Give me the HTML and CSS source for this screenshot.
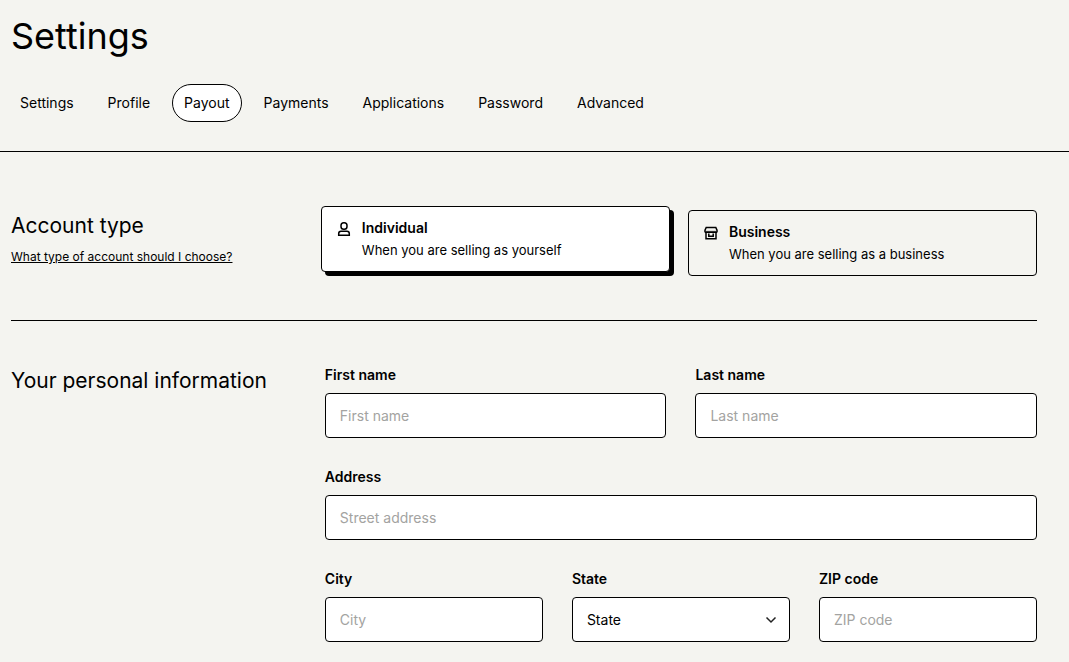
FILE: index.html
```html
<!DOCTYPE html>
<html lang="en">
<head>
  <meta charset="UTF-8">
  <meta name="viewport" content="width=device-width, initial-scale=1.0">
  <title>Settings</title>
  <link rel="stylesheet" href="styles.css">
</head>
<body>
  <header class="page-header">
    <h1>Settings</h1>
    <nav class="tabs">
      <a href="#settings">Settings</a>
      <a href="#profile">Profile</a>
      <a href="#payout" class="active" aria-current="page">Payout</a>
      <a href="#payments">Payments</a>
      <a href="#applications">Applications</a>
      <a href="#password">Password</a>
      <a href="#advanced">Advanced</a>
    </nav>
  </header>

  <main>
    <section class="section">
      <div class="section-intro">
        <h2>Account type</h2>
        <a href="#account-type" class="help-link">What type of account should I choose?</a>
      </div>
      <div class="account-types" role="radiogroup" aria-label="Account type">
        <button type="button" class="card selected" role="radio" aria-checked="true">
          <svg class="icon" viewBox="0 0 16 16" aria-hidden="true">
            <rect x="5" y="1.7" width="6" height="6.600" rx="2.800"/>
            <path d="M5 10.300h6q2.300 0 2.300 2.400v1.600H2.700v-1.600q0-2.400 2.300-2.400z"/>
          </svg>
          <span class="card-text">
            <strong>Individual</strong>
            <span>When you are selling as yourself</span>
          </span>
        </button>
        <button type="button" class="card" role="radio" aria-checked="false">
          <svg class="icon" viewBox="0 0 16 16" aria-hidden="true">
            <path d="M3.200 2.500h9.600L14 5.200v1.500q-1 1.200-2 0q-1 1.200-2 0q-1 1.200-2 0q-1 1.200-2 0q-1 1.200-2 0q-1 1.200-2 0V5.200z"/>
            <path d="M3 7.500v6.300h10V7.500"/>
            <path d="M5.800 8.500v2.800h4.400V8.500"/>
          </svg>
          <span class="card-text">
            <strong>Business</strong>
            <span>When you are selling as a business</span>
          </span>
        </button>
      </div>
    </section>

    <section class="section">
      <div class="section-intro">
        <h2>Your personal information</h2>
      </div>
      <form class="fields">
        <div class="row">
          <div class="field">
            <label for="firstName">First name</label>
            <input type="text" id="firstName" name="first_name" placeholder="First name">
          </div>
          <div class="field">
            <label for="lastName">Last name</label>
            <input type="text" id="lastName" name="last_name" placeholder="Last name">
          </div>
        </div>
        <div class="row">
          <div class="field">
            <label for="address">Address</label>
            <input type="text" id="address" name="address" placeholder="Street address">
          </div>
        </div>
        <div class="row">
          <div class="field">
            <label for="city">City</label>
            <input type="text" id="city" name="city" placeholder="City">
          </div>
          <div class="field">
            <label for="state">State</label>
            <div class="select">
              <select id="state" name="state">
                <option>State</option>
              </select>
              <svg class="chevron" viewBox="0 0 12 12" aria-hidden="true"><path d="M1.500 3.500L6 8l4.500-4.500"/></svg>
            </div>
          </div>
          <div class="field">
            <label for="zip">ZIP code</label>
            <input type="text" id="zip" name="zip" placeholder="ZIP code">
          </div>
        </div>
      </form>
    </section>
  </main>
</body>
</html>
```
FILE: styles.css
```css
* {
  box-sizing: border-box;
}
body {
  margin: 0;
  background-color: #f4f4f0;
  color: #000;
  font-family: Inter, sans-serif;
  font-size: 14px;
  line-height: 20px;
}
h1, h2 {
  margin: 0;
  font-weight: normal;
}
h1 {
  padding-left: 11px;
  font-size: 36px;
  line-height: 44px;
}
h2 {
  font-size: 21px;
  line-height: 31px;
}
.page-header {
  padding: 14px 0 29px;
  border-bottom: 1px solid #000;
}
.tabs {
  display: flex;
  gap: 10px;
  margin-top: 26px;
  padding-left: 8px;
}
.tabs a {
  padding: 8px 11px;
  border: 1px solid transparent;
  border-radius: 19px;
  color: #000;
  text-decoration: none;
}
.tabs a.active {
  border-color: #000;
  background-color: #fff;
}
main {
  padding: 14px 32px 0 11px;
}
.section {
  display: grid;
  grid-template-columns: 1fr 2.5fr;
  gap: 29px;
  padding: 44px 0;
}
.section + .section {
  border-top: 1px solid #000;
  padding-bottom: 16px;
}
.help-link {
  display: block;
  margin-top: 6px;
  color: #000;
  font-size: 12px;
}
.account-types {
  display: grid;
  grid-template-columns: 1fr 1fr;
  gap: 14px;
}
.card {
  display: flex;
  align-items: flex-start;
  gap: 10px;
  padding: 10px 14px;
  border: 1px solid #000;
  border-radius: 4px;
  background-color: transparent;
  color: #000;
  font: inherit;
  text-align: left;
  cursor: pointer;
}
.card.selected {
  background-color: #fff;
  box-shadow: 4px 4px 0 #000;
  transform: translate(-4px, -4px);
}
.card-text {
  display: grid;
  font-size: 13px;
  line-height: 22px;
}
strong, label {
  font-size: 14px;
  font-weight: 600;
}
.icon {
  width: 16px;
  height: 16px;
  margin-top: 4px;
  fill: none;
  stroke: #000;
  stroke-width: 1.5;
}
.fields {
  display: grid;
  gap: 29px;
}
.row {
  display: grid;
  grid-auto-flow: column;
  grid-auto-columns: minmax(0, 1fr);
  gap: 29px;
}
.field {
  display: grid;
  gap: 8px;
}
input, select {
  width: 100%;
  height: 45px;
  padding: 0 14px;
  border: 1px solid #000;
  border-radius: 4px;
  background-color: #fff;
  color: #000;
  font: inherit;
}
input::placeholder {
  color: #a3a3a1;
}
select {
  appearance: none;
}
.select {
  position: relative;
}
.chevron {
  position: absolute;
  top: 17px;
  right: 13px;
  width: 12px;
  height: 12px;
  fill: none;
  stroke: #222;
  stroke-width: 1.5;
  pointer-events: none;
}
```
